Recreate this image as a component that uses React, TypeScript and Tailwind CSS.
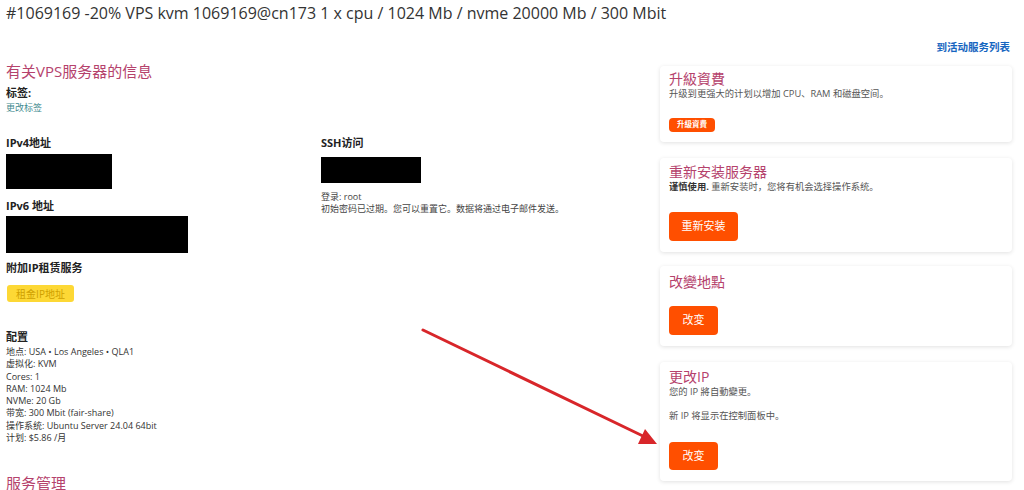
import React from 'react';

const FONT = '"Open Sans", "Noto Sans CJK SC", sans-serif';

const configLines = [
  '地点: USA • Los Angeles • QLA1',
  '虚拟化: KVM',
  'Cores: 1',
  'RAM: 1024 Mb',
  'NVMe: 20 Gb',
  '带宽: 300 Mbit (fair-share)',
  '操作系统: Ubuntu Server 24.04 64bit',
  '计划: $5.86 /月',
];

const Card: React.FC<{ className?: string; children: React.ReactNode }> = ({ className = '', children }) => (
  <div className={`bg-white rounded-[4px] shadow-[0_1px_4px_rgba(0,0,0,0.12)] px-[9px] ${className}`}>
    {children}
  </div>
);

const CardTitle: React.FC<{ children: React.ReactNode }> = ({ children }) => (
  <div className="text-[14px] leading-[16px] text-[#b5426c]">{children}</div>
);

const OrangeButton: React.FC<{ children: React.ReactNode; className?: string }> = ({ children, className = '' }) => (
  <button className={`bg-[#ff4f00] text-white rounded-[4px] flex items-center justify-center ${className}`}>
    {children}
  </button>
);

const App: React.FC = () => {
  return (
    <div className="relative w-[1024px] h-[490px] overflow-hidden bg-white text-[#333]" style={{ fontFamily: FONT }}>
      {/* Page title */}
      <div className="px-[6px] pt-[3px] h-[28px] text-[16px] leading-[20px] text-[#333]">
        #1069169 -20% VPS kvm 1069169@cn173 1 x cpu / 1024 Mb / nvme 20000 Mb / 300 Mbit
      </div>

      <div className="flex justify-end pr-[14px] h-[34px] pt-[12px]">
        <a className="text-[10.5px] leading-[14px] font-bold text-[#1565c0]">到活动服务列表</a>
      </div>

      <div className="flex">
        {/* Left column */}
        <div className="flex-1 pl-[6px]">
          <h2 className="text-[15px] leading-[18px] text-[#b5426c]">有关VPS服务器的信息</h2>
          <div className="mt-[6px] text-[11px] leading-[14px] font-bold text-[#222]">标签:</div>
          <div className="mt-[2px] text-[9px] leading-[12px] text-[#3f8a8f]">更改标签</div>

          <div className="flex mt-[22px]">
            <div className="w-[315px]">
              <div className="text-[11px] leading-[14px] font-bold text-[#222]">IPv4地址</div>
              <div className="mt-[4px] w-[106px] h-[35px] bg-black" />
              <div className="mt-[10px] text-[11px] leading-[14px] font-bold text-[#222]">IPv6 地址</div>
              <div className="mt-[3px] w-[182px] h-[37px] bg-black" />
              <div className="mt-[8px] text-[11px] leading-[14px] font-bold text-[#222]">附加IP租赁服务</div>
              <button className="mt-[10px] ml-[1px] w-[67px] h-[17px] rounded-[3px] bg-[#fdd835] text-[10px] leading-[12px] text-[#cfa000] flex items-center justify-center">
                租金IP地址
              </button>
              <div className="mt-[28px] text-[11px] leading-[14px] font-bold text-[#222]">配置</div>
              <div className="mt-[2px] text-[9px] leading-[12.3px] text-[#333]">
                {configLines.map((l) => (
                  <div key={l}>{l}</div>
                ))}
              </div>
              <h2 className="mt-[30px] text-[15px] leading-[18px] text-[#b5426c]">服务管理</h2>
            </div>
            <div className="flex-1">
              <div className="text-[11px] leading-[14px] font-bold text-[#222]">SSH访问</div>
              <div className="mt-[7px] w-[100px] h-[26px] bg-black" />
              <div className="mt-[8px] text-[9px] leading-[12px] text-[#444]">
                <div>登录: root</div>
                <div>初始密码已过期。您可以重置它。数据将通过电子邮件发送。</div>
              </div>
            </div>
          </div>
        </div>

        {/* Right column */}
        <div className="w-[352px] mr-[12px] mt-[4px] flex flex-col">
          <Card className="pt-[5px] pb-[10px]">
            <CardTitle>升級資費</CardTitle>
            <div className="mt-[1px] text-[9.3px] leading-[12px] text-[#555]">升级到更强大的计划以增加 CPU、RAM 和磁盘空间。</div>
            <OrangeButton className="mt-[18px] w-[46px] h-[14px] text-[7.5px] font-bold">升級資費</OrangeButton>
          </Card>

          <Card className="mt-[16px] pt-[6px] pb-[11px]">
            <CardTitle>重新安装服务器</CardTitle>
            <div className="mt-[1px] text-[9.3px] leading-[12px] text-[#555]">
              <span className="font-bold text-[#333]">谨慎使用.</span> 重新安装时，您将有机会选择操作系统。
            </div>
            <OrangeButton className="mt-[19px] w-[69px] h-[29px] text-[11px]">重新安装</OrangeButton>
          </Card>

          <Card className="mt-[14px] pt-[8px] pb-[11px]">
            <CardTitle>改變地點</CardTitle>
            <OrangeButton className="mt-[16px] w-[49px] h-[29px] text-[11px]">改変</OrangeButton>
          </Card>

          <Card className="mt-[16px] pt-[7px] pb-[11px]">
            <CardTitle>更改IP</CardTitle>
            <div className="mt-[1px] text-[9.3px] leading-[12px] text-[#555]">
              <div>您的 IP 將自動變更。</div>
              <div className="h-[12px]" />
              <div>新 IP 将显示在控制面板中。</div>
            </div>
            <OrangeButton className="mt-[20px] w-[49px] h-[28px] text-[11px]">改変</OrangeButton>
          </Card>
        </div>
      </div>

      {/* Annotation arrow */}
      <svg className="absolute left-0 top-0 pointer-events-none" width="1024" height="490">
        <line x1="423" y1="330" x2="645" y2="437" stroke="#d8262a" strokeWidth="3" strokeLinecap="round" />
        <polygon points="657,444 638,444 645,429" fill="#d8262a" />
      </svg>
    </div>
  );
};

export default App;
